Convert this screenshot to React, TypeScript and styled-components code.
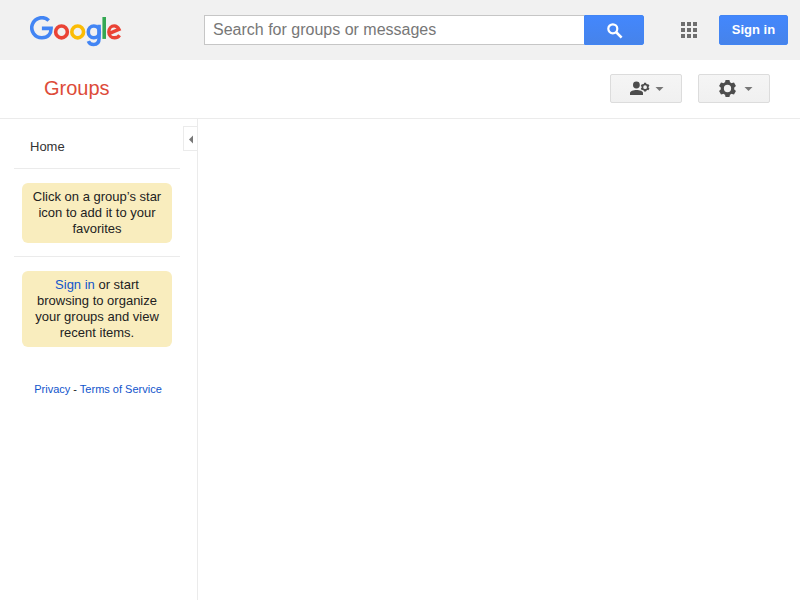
import React from "react";
import styled, { createGlobalStyle } from "styled-components";

const GlobalStyle = createGlobalStyle`
  *, *::before, *::after { box-sizing: border-box; }
  body {
    margin: 0;
    background: #fff;
    color: #222;
    font: 13px/16px "Liberation Sans", Arial, sans-serif;
  }
`;

const Page = styled.div`
  height: 100vh;
  display: flex;
  flex-direction: column;
  overflow: hidden;
`;

const TopBar = styled.header`
  height: 60px;
  flex: none;
  display: flex;
  align-items: center;
  padding: 0 12px 0 30px;
  background: #f1f1f1;
`;

const LogoLink = styled.a`
  width: 174px;
  height: 31px;
  margin-top: 3px;
  flex: none;
`;

const SearchForm = styled.form`
  display: flex;
  width: 440px;
  height: 30px;
`;

const SearchInput = styled.input`
  width: 380px;
  height: 30px;
  padding: 0 8px;
  border: 1px solid #c6c6c6;
  border-right: 0;
  border-radius: 0;
  outline: none;
  background: #fff;
  font: 16px "Liberation Sans", Arial, sans-serif;
  &::placeholder { color: #777; opacity: 1; }
`;

const BlueButton = styled.button<{ $width: number; $joined?: boolean }>`
  width: ${(p) => p.$width}px;
  height: 30px;
  padding: ${(p) => (p.$joined ? "1px 0 0 1px" : "0 0 2px")};
  display: flex;
  align-items: center;
  justify-content: center;
  border: 1px solid #4285f4;
  border-radius: ${(p) => (p.$joined ? "0 2px 2px 0" : "2px")};
  background: linear-gradient(#4387fd, #4683ea);
  color: #fff;
  font: bold 13px "Liberation Sans", Arial, sans-serif;
`;

const AppsGrid = styled.div`
  display: grid;
  grid-template-columns: repeat(3, 4px);
  grid-auto-rows: 4px;
  gap: 2px;
  margin: 0 22px 0 37px;
`;

const AppsCell = styled.span`
  background: #6e6e6e;
`;

const TitleBar = styled.div`
  height: 59px;
  flex: none;
  display: flex;
  justify-content: space-between;
  padding: 14px 30px 0 44px;
  border-bottom: 1px solid #ebebeb;
`;

const Title = styled.h1`
  margin: 0;
  color: #dd4b39;
  font-size: 20px;
  font-weight: normal;
  line-height: 29px;
`;

const Tools = styled.div`
  display: flex;
  gap: 16px;
`;

const ToolButton = styled.button`
  width: 72px;
  height: 29px;
  padding: 0;
  display: flex;
  border: 1px solid #dcdcdc;
  border-radius: 2px;
  background: linear-gradient(#f5f5f5, #f0f0f0);
`;

const Body = styled.div`
  flex: 1;
  display: flex;
`;

const Sidebar = styled.nav`
  width: 198px;
  display: flex;
  align-items: flex-start;
  border-right: 1px solid #ebebeb;
`;

const SidebarContent = styled.div`
  width: 166px;
  margin: 0 3px 0 14px;
`;

const Section = styled.div`
  padding: 14px 8px 13px;
`;

const HomeSection = styled.div`
  height: 50px;
  padding: 20px 16px 0;
  border-bottom: 1px solid #ebebeb;
  color: #333;
`;

const FavoritesSection = styled(Section)`
  border-bottom: 1px solid #ebebeb;
`;

const Tip = styled.p`
  margin: 0;
  padding: 6px 8px;
  border-radius: 6px;
  background: #f9edbe;
  text-align: center;
`;

const Link = styled.a`
  color: #15c;
  text-decoration: none;
`;

const Footer = styled.footer`
  margin-top: 21px;
  padding-left: 2px;
  font-size: 11px;
  text-align: center;
`;

const CollapseTab = styled.button`
  width: 14px;
  height: 25px;
  margin-top: 7px;
  padding: 0;
  display: flex;
  border: 1px solid #ebebeb;
  border-right: 0;
  background: #fff;
`;

const Logo = () => (
  <svg width="92" height="31" viewBox="0 0 272 92" preserveAspectRatio="xMinYMin meet" fill="none" strokeWidth="10.6">
    <path stroke="#4285f4" d="M55.6 13.3A29.8 29.8 0 1 0 35.3 64.7C54 64.7 62.7 53 62.7 36.7H35.3" />
    <ellipse stroke="#ea4335" cx="93.5" cy="47.2" rx="17.4" ry="17.7" />
    <ellipse stroke="#fbbc05" cx="141.5" cy="47.2" rx="17.4" ry="17.7" />
    <ellipse stroke="#4285f4" cx="189.4" cy="47.2" rx="16.4" ry="17.5" />
    <path stroke="#4285f4" d="M205 26.3V66.2C205 79 198 84.8 188.7 84.8C181 84.8 175.5 80 173.2 74.4" />
    <path stroke="#34a853" d="M220.2 3V68" />
    <path stroke="#ea4335" strokeWidth="10" d="M265.8 57C262 62.5 257.5 64.6 251.1 64.6C241 64.6 233.9 57 233.9 47.2C233.9 36.5 241.5 29.3 250 29.3C257 29.3 261.5 34 264.2 39.8L237.5 50.8" />
  </svg>
);

const SearchIcon = () => (
  <svg width="16" height="16" viewBox="0 0 16 16" fill="none" stroke="#fff">
    <circle cx="5.8" cy="5.8" r="4.5" strokeWidth="2.2" />
    <path d="M9 9L14.6 14.6" strokeWidth="2.6" />
  </svg>
);

const Gear = ({ x, y, scale }: { x: number; y: number; scale: number }) => (
  <g transform={`translate(${x} ${y}) scale(${scale})`}>
    <circle r="5.3" fill="none" stroke="#4d4d4d" strokeWidth="3.2" />
    {[0, 60, 120, 180, 240, 300].map((angle) => (
      <path key={angle} fill="#4d4d4d" transform={`rotate(${angle})`} d="M-2.7 -5.8L-2 -8.8H2L2.7 -5.8Z" />
    ))}
  </g>
);

const MembersIcon = () => (
  <svg width="70" height="27" viewBox="611 75 70 27">
    <circle cx="636.4" cy="85" r="3.4" fill="#4d4d4d" />
    <path fill="#4d4d4d" d="M630 95V93C630 90.8 633.5 89.9 636.5 89.9S643 90.8 643 93V95Z" />
    <Gear x={645.1} y={87.2} scale={0.5} />
    <path fill="#777" d="M655.5 87H663.5L659.5 91Z" />
  </svg>
);

const SettingsIcon = () => (
  <svg width="70" height="27" viewBox="699 75 70 27">
    <Gear x={727.5} y={88.5} scale={0.98} />
    <path fill="#777" d="M744.5 87H752.5L748.5 91Z" />
  </svg>
);

const CollapseArrow = () => (
  <svg width="13" height="23" viewBox="0 0 13 23">
    <path fill="#777" d="M9 8.5V16.5L5 12.5Z" />
  </svg>
);

export default function App() {
  return (
    <>
      <GlobalStyle />
      <Page>
        <TopBar>
          <LogoLink aria-label="Google"><Logo /></LogoLink>
          <SearchForm>
            <SearchInput placeholder="Search for groups or messages" />
            <BlueButton type="button" $width={60} $joined aria-label="Search"><SearchIcon /></BlueButton>
          </SearchForm>
          <AppsGrid>
            {Array.from({ length: 9 }, (_, i) => <AppsCell key={i} />)}
          </AppsGrid>
          <BlueButton $width={69}>Sign in</BlueButton>
        </TopBar>
        <TitleBar>
          <Title>Groups</Title>
          <Tools>
            <ToolButton aria-label="Members"><MembersIcon /></ToolButton>
            <ToolButton aria-label="Settings"><SettingsIcon /></ToolButton>
          </Tools>
        </TitleBar>
        <Body>
          <Sidebar>
            <SidebarContent>
              <HomeSection>Home</HomeSection>
              <FavoritesSection>
                <Tip>Click on a group’s star icon to add it to your favorites</Tip>
              </FavoritesSection>
              <Section>
                <Tip><Link>Sign in</Link> or start browsing to organize your groups and view recent items.</Tip>
              </Section>
              <Footer><Link>Privacy</Link> - <Link>Terms of Service</Link></Footer>
            </SidebarContent>
            <CollapseTab aria-label="Collapse"><CollapseArrow /></CollapseTab>
          </Sidebar>
        </Body>
      </Page>
    </>
  );
}
